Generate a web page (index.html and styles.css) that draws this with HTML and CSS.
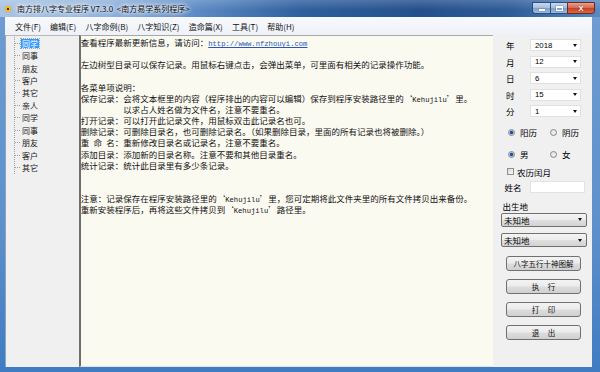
FILE: index.html
```html
<!DOCTYPE html>
<html lang="zh-CN">
<head>
<meta charset="utf-8">
<title>南方排八字专业程序</title>
<link rel="stylesheet" href="styles.css">
</head>
<body>
<div class="win">
  <div class="titlebar">
    <span class="appicon"></span>
    <span class="title">南方排八字专业程序 V7.3.0&nbsp;&nbsp;&lt;南方易学系列程序&gt;</span>
    <div class="ctrls">
      <span class="cb min"><i></i></span><span class="cb max"><i></i></span><span class="cb close">X</span>
    </div>
  </div>
  <div class="frame">
    <div class="menubar">
      <span class="mi">文件(F)</span>
      <span class="mi">编辑(E)</span>
      <span class="mi">八字命例(B)</span>
      <span class="mi">八字知识(Z)</span>
      <span class="mi">造命篇(X)</span>
      <span class="mi">工具(T)</span>
      <span class="mi">帮助(H)</span>
    </div>
    <div class="main">
      <div class="tree">
        <ul class="nodes">
          <li><span class="sel">同学</span></li>
          <li><span>同事</span></li>
          <li><span>朋友</span></li>
          <li><span>客户</span></li>
          <li><span>其它</span></li>
          <li><span>亲人</span></li>
          <li><span>同学</span></li>
          <li><span>同事</span></li>
          <li><span>朋友</span></li>
          <li><span>客户</span></li>
          <li class="last"><span>其它</span></li>
        </ul>
      </div>
      <div class="text">
<div class="ln">查看程序最新更新信息，请访问：<span class="a link">http://www.nfzhouyi.com</span></div>
<div class="ln"> </div>
<div class="ln">左边树型目录可以保存记录。用鼠标右键点击，会弹出菜单，可里面有相关的记录操作功能。</div>
<div class="ln"> </div>
<div class="ln">各菜单项说明：</div>
<div class="ln">保存记录：会将文本框里的内容（程序排出的内容可以编辑）保存到程序安装路径里的‘<span class="a">Kehujilu</span>’里。</div>
<div class="ln ind">以求占人姓名做为文件名，注意不要重名。</div>
<div class="ln">打开记录：可以打开此记录文件，用鼠标双击此记录名也可。</div>
<div class="ln">删除记录：可删除目录名，也可删除记录名。（如果删除目录，里面的所有记录也将被删除。）</div>
<div class="ln">重&#8194;命&#8194;名：重新修改目录名或记录名，注意不要重名。</div>
<div class="ln">添加目录：添加新的目录名称。注意不要和其他目录重名。</div>
<div class="ln">统计记录：统计此目录里有多少条记录。</div>
<div class="ln"> </div>
<div class="ln"> </div>
<div class="ln">注意：记录保存在程序安装路径里的‘<span class="a">Kehujilu</span>’里，您可定期将此文件夹里的所有文件拷贝出来备份。</div>
<div class="ln">重新安装程序后，再将这些文件拷贝到‘<span class="a">Kehujilu</span>’路径里。</div>
      </div>
      <div class="side">
        <div class="fields">
          <span class="lbl">年</span><div class="combo"><span>2018</span><b class="arr"></b></div>
          <span class="lbl">月</span><div class="combo"><span>12</span><b class="arr"></b></div>
          <span class="lbl">日</span><div class="combo"><span>6</span><b class="arr"></b></div>
          <span class="lbl">时</span><div class="combo"><span>15</span><b class="arr"></b></div>
          <span class="lbl">分</span><div class="combo"><span>1</span><b class="arr"></b></div>
        </div>
        <div class="radios r1">
          <span class="opt"><i class="radio on"></i>阳历</span>
          <span class="opt"><i class="radio"></i>阴历</span>
        </div>
        <div class="radios r2">
          <span class="opt"><i class="radio on"></i>男</span>
          <span class="opt"><i class="radio"></i>女</span>
        </div>
        <div class="check"><i class="cbox"></i>农历闰月</div>
        <div class="namerow"><span>姓名</span><div class="input"></div></div>
        <div class="birth">出生地</div>
        <div class="dd d1"><span>未知地</span><b class="arr"></b></div>
        <div class="dd d2"><span>未知地</span><b class="arr"></b></div>
        <div class="btn b1">八字五行十神图解</div>
        <div class="btn b2 sp">执行</div>
        <div class="btn b3 sp">打印</div>
        <div class="btn b4 sp">退出</div>
      </div>
    </div>
  </div>
</div>
</body>
</html>
```
FILE: styles.css
```css
* { box-sizing: border-box; }
html, body { margin: 0; padding: 0; }
body {
  width: 600px;
  height: 372px;
  overflow: hidden;
  font-family: "Noto Sans CJK SC", "Noto Sans", sans-serif;
  color: #000;
}
.win {
  width: 600px;
  height: 372px;
  display: flex;
  flex-direction: column;
  background: linear-gradient(180deg, #6f9dd2 0%, #5e90cb 60%, #3f7cc2 100%);
}
.titlebar {
  height: 17px;
  display: flex;
  align-items: center;
  padding-left: 5px;
  background:
    linear-gradient(180deg, rgba(255,255,255,0.18), rgba(255,255,255,0) 60%),
    linear-gradient(90deg, #a9c3e3 0%, #8fb1dc 18%, #5d8cc6 32%, #2f5f9e 50%, #244f8c 70%, #2d5b98 85%, #5a88c2 100%);
}
.appicon {
  width: 6px;
  height: 6px;
  border-radius: 50%;
  background: radial-gradient(circle, #4a3000 0 22%, #f6c21a 32%, #e6a800 100%);
  margin-right: 6px;
}
.title {
  font-size: 8px;
  color: #111;
  text-shadow: 0 0 3px #fff, 0 0 5px #fff, 0 0 6px #e8f0fa;
  white-space: nowrap;
}
.ctrls {
  margin-left: auto;
  margin-right: 5px;
  align-self: flex-start;
  margin-top: 2px;
  display: flex;
}
.cb {
  height: 12px;
  border: 1px solid #2b4f7d;
  display: flex;
  align-items: center;
  justify-content: center;
  background: linear-gradient(180deg, #c8d9ee 0%, #a6bfdf 45%, #7f9fcb 50%, #9cb8dd 100%);
}
.min { width: 18px; border-radius: 0 0 0 3px; border-right: none; }
.min i { width: 6px; height: 2px; background: #fff; margin-top: 4px; box-shadow: 0 0 1px #334; }
.max { width: 17px; border-right: none; }
.max i { width: 7px; height: 5px; border: 1px solid #fff; border-top-width: 2px; box-shadow: 0 0 1px #334; }
.close {
  width: 28px;
  border-radius: 0 0 3px 0;
  background: linear-gradient(180deg, #e7a18f 0%, #d66c53 45%, #c2401f 50%, #d66a42 100%);
  color: #fff;
  font: bold 7.5px "Liberation Sans", sans-serif;
  text-shadow: 0 0 1px #622;
  border-color: #6c2a20;
}
.frame {
  flex: 1;
  display: flex;
  flex-direction: column;
  padding: 0 8px 5px 5px;
  min-height: 0;
}
.menubar {
  height: 18px;
  display: flex;
  align-items: center;
  padding-left: 5.5px;
  background: linear-gradient(180deg, #f7f9fc 0%, #eef2f8 100%);
  font-size: 8px;
  color: #111;
}
.mi { padding: 0 4.6px; white-space: nowrap; }
.main {
  flex: 1;
  display: flex;
  min-height: 0;
}
.tree {
  width: 74px;
  background: #f0f0f0;
  border-left: 1px solid #8aa4c4;
  border-top: 1px solid #b8b8b8;
  padding-top: 1px;
}
.nodes {
  list-style: none;
  margin: 0 0 0 8px;
  padding: 0;
  border-left: 1px dotted #a0a0a0;
  font-size: 8px;
}
.nodes li {
  height: 12.43px;
  display: flex;
  align-items: center;
}
.nodes li::before {
  content: "";
  width: 5px;
  border-top: 1px dotted #a0a0a0;
  margin-right: 1px;
}
.nodes span { padding: 0 1px; line-height: 9px; color: #222; }
.nodes .sel {
  background: #3399ff;
  color: #fff;
  outline: 1px dotted #8ab;
}
.text {
  width: 416px;
  background: #fbfaf1;
  border-left: 2px solid #6e6e6e;
  border-top: 1px solid #a8a8a8;
  border-bottom: 1px solid #e2e2e2;
  padding: 1.2px 0 0 0;
  font-size: 8.5px;
  line-height: 11.15px;
  color: #111;
  overflow: hidden;
}
.ln { white-space: pre; height: 11.15px; }
.ind { padding-left: 5em; }
.a { font-family: "Liberation Mono", monospace; font-size: 7.2px; }
.link { color: #2a55b8; text-decoration: underline; }
.side {
  flex: 1;
  background: #f0f0f0;
  padding: 4px 0 0 13px;
  display: flex;
  flex-direction: column;
  align-items: flex-start;
  font-size: 8.5px;
}
.fields {
  display: grid;
  grid-template-columns: 24px 51px;
  row-gap: 4.5px;
  align-items: center;
}
.lbl { font-size: 8.5px; line-height: 12px; }
.combo {
  height: 12px;
  background: #fff;
  border: 1px solid #e1e1e1;
  display: flex;
  align-items: center;
  padding: 0 3px 0 4px;
  font: 7.8px "Liberation Sans", sans-serif;
}
.arr {
  margin-left: auto;
  width: 0;
  height: 0;
  border-left: 2.5px solid transparent;
  border-right: 2.5px solid transparent;
  border-top: 3px solid #111;
}
.radios { display: flex; margin-left: 2px; height: 12px; align-items: center; }
.r1 { margin-top: 9px; }
.r2 { margin-top: 10px; }
.opt { display: flex; align-items: center; width: 42px; }
.radio {
  width: 7px;
  height: 7px;
  border-radius: 50%;
  border: 1px solid #8a8a8a;
  background: radial-gradient(circle, #f4f4f4 0%, #d8d8d8 100%);
  margin-right: 5px;
}
.radio.on { background: radial-gradient(circle, #1b4f9a 0 35%, #6f9bd0 50%, #e8e8e8 70%); }
.check { display: flex; align-items: center; height: 12px; margin-top: 5.5px; margin-left: 1px; }
.cbox {
  width: 7px;
  height: 7px;
  border: 1px solid #8e8f8f;
  background: linear-gradient(135deg, #d6d6d6, #fbfbfb);
  margin-right: 3px;
}
.namerow { display: flex; align-items: center; margin-top: 3.5px; margin-left: -1.5px; height: 12px; }
.input {
  width: 55px;
  height: 12px;
  background: #fff;
  border: 1px solid #e3e3e3;
  margin-left: 8.5px;
}
.birth { margin-top: 7px; margin-left: -3.5px; line-height: 12px; }
.dd {
  width: 86px;
  margin-left: -5px;
  height: 13.5px;
  border: 1px solid #707070;
  border-radius: 2px;
  background: linear-gradient(180deg, #f4f4f4 0%, #ececec 48%, #dfdfdf 52%, #d2d2d2 100%);
  display: flex;
  align-items: center;
  padding: 0 4px 0 2px;
  font-size: 8.5px;
}
.d1 { margin-top: 1px; }
.d2 { margin-top: 6.5px; height: 14px; }
.btn {
  width: 75px;
  height: 15px;
  border: 1px solid #707070;
  border-radius: 3px;
  background: linear-gradient(180deg, #f3f3f3 0%, #ebebeb 48%, #dddddd 52%, #d0d0d0 100%);
  display: flex;
  align-items: center;
  justify-content: center;
  font-size: 7.5px;
  color: #111;
}
.b1 { margin-top: 9px; }
.b2, .b3, .b4 { margin-top: 8px; }
.sp { letter-spacing: 8.5px; text-indent: 8.5px; }
```
